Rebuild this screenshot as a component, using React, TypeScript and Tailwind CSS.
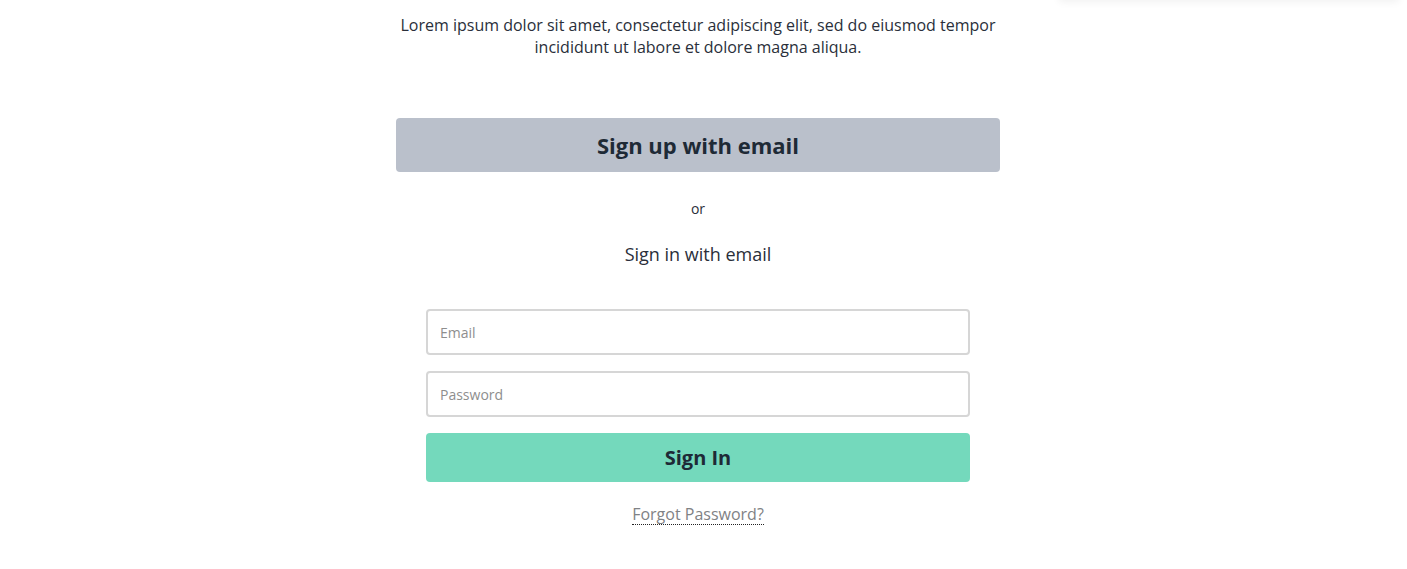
import React from 'react';

export default function App() {
  return (
    <div className="relative min-h-[569px] bg-white overflow-hidden pr-[11px] font-['Open_Sans',sans-serif] text-[#2a2f3a]">
      {/* dropdown edge peeking from the top */}
      <div className="absolute right-[8px] top-[-40px] w-[340px] h-[40px] bg-white shadow-[0_2px_8px_rgba(0,0,0,0.06)]" />

      <div className="mx-auto w-[604px] pt-[14px] flex flex-col items-center">
        <p className="text-[16px] leading-[22px] text-center">
          Lorem ipsum dolor sit amet, consectetur adipiscing elit, sed do eiusmod tempor incididunt ut labore et dolore magna aliqua.
        </p>

        <button className="mt-[60px] w-full h-[54px] rounded-[4px] bg-[#bac0cb] text-[22px] font-bold text-[#1e2a36]">
          Sign up with email
        </button>

        <div className="mt-[27px] text-[14px] leading-[20px]">or</div>

        <div className="mt-[23px] text-[18px] leading-[24px]">Sign in with email</div>

        <form className="mt-[43px] w-[544px] flex flex-col gap-[16px]">
          <input
            placeholder="Email"
            className="h-[46px] w-full rounded-[4px] border-2 border-[#d6d6d6] px-[12px] text-[14px] placeholder:text-[#8e8e8e] outline-none"
          />
          <input
            placeholder="Password"
            type="password"
            className="h-[46px] w-full rounded-[4px] border-2 border-[#d6d6d6] px-[12px] text-[14px] placeholder:text-[#8e8e8e] outline-none"
          />
          <button
            type="button"
            className="h-[49px] w-full rounded-[4px] bg-[#74d9bc] text-[20px] font-bold text-[#1e2a36]"
          >
            Sign In
          </button>
        </form>

        <a className="mt-[22px] text-[16px] leading-[20px] text-[#7f8285] border-b border-dotted border-[#222]">
          Forgot Password?
        </a>
      </div>
    </div>
  );
}
